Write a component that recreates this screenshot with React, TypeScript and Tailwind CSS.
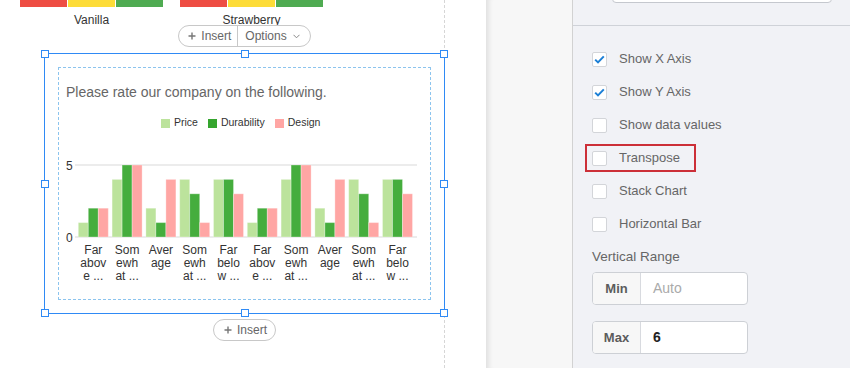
import React from 'react';

const bars = [
  [1, 2, 2],
  [4, 5, 5],
  [2, 1, 4],
  [4, 3, 1],
  [4, 4, 3],
  [1, 2, 2],
  [4, 5, 5],
  [2, 1, 4],
  [4, 3, 1],
  [4, 4, 3],
];

const labels = [
  ['Far', 'abov', 'e ...'],
  ['Som', 'ewh', 'at ...'],
  ['Aver', 'age'],
  ['Som', 'ewh', 'at ...'],
  ['Far', 'belo', 'w ...'],
  ['Far', 'abov', 'e ...'],
  ['Som', 'ewh', 'at ...'],
  ['Aver', 'age'],
  ['Som', 'ewh', 'at ...'],
  ['Far', 'belo', 'w ...'],
];

const barColors = ['#bce39c', '#45ad3d', '#ffa6a4'];

const options = [
  { label: 'Show X Axis', checked: true },
  { label: 'Show Y Axis', checked: true },
  { label: 'Show data values', checked: false },
  { label: 'Transpose', checked: false, highlight: true },
  { label: 'Stack Chart', checked: false },
  { label: 'Horizontal Bar', checked: false },
];

const Plus = () => (
  <svg width="8" height="8" viewBox="0 0 8 8">
    <path d="M4 0.5v7M0.5 4h7" stroke="#777" strokeWidth="1.4" />
  </svg>
);

const Handle = ({ className }: { className: string }) => (
  <div className={`absolute w-[8px] h-[8px] bg-white border border-[#2f8af5] ${className}`} />
);

const Checkbox = ({ checked }: { checked: boolean }) => (
  <div className="w-[15px] h-[15px] bg-white border border-[#d3d5d9] rounded-[2px] flex items-center justify-center">
    {checked && (
      <svg width="11" height="9" viewBox="0 0 11 9">
        <path d="M1.2 4.6l2.8 2.8L9.8 1.4" fill="none" stroke="#1b7fd6" strokeWidth="2" />
      </svg>
    )}
  </div>
);

const Chart = () => {
  const base = 87;
  const unit = 14.4;
  return (
    <svg width="372" height="140" viewBox="0 0 372 140" className="block">
      <line x1="16" y1="15" x2="358" y2="15" stroke="#e6e6e6" strokeWidth="1.5" />
      <line x1="16" y1={base} x2="358" y2={base} stroke="#e6e6e6" strokeWidth="1.5" />
      <text x="7" y="19.5" fontSize="12" fill="#333">5</text>
      <text x="7" y="91.5" fontSize="12" fill="#333">0</text>
      {bars.map((group, i) => {
        const x0 = 19.3 + i * 33.8;
        return (
          <g key={i}>
            {group.map((v, j) => (
              <rect
                key={j}
                x={x0 + j * 10}
                y={base - v * unit}
                width="10"
                height={v * unit}
                fill={barColors[j]}
                stroke="#ffffff"
                strokeOpacity="0.3"
                strokeWidth="1"
              />
            ))}
            {labels[i].map((line, k) => (
              <text key={k} x={x0 + 15} y={104 + k * 13} fontSize="12" fill="#333" textAnchor="middle">
                {line}
              </text>
            ))}
          </g>
        );
      })}
    </svg>
  );
};

const App = () => {
  return (
    <div className="w-[850px] h-[368px] overflow-hidden flex font-['Liberation_Sans',Arial,sans-serif]">
      {/* canvas */}
      <div className="w-[486px] h-full bg-white">
        <div className="w-[445px] h-full border-r border-dashed border-[#d6d6d6]">
          <div className="flex pl-[20px] gap-[17px]">
            {['Vanilla', 'Strawberry'].map(name => (
              <div key={name} className="w-[143px] flex flex-col">
                <div className="flex gap-px h-[7px]">
                  <div className="flex-1 bg-[#ee4d43]" />
                  <div className="flex-1 bg-[#fddc38]" />
                  <div className="flex-1 bg-[#4fab52]" />
                </div>
                <div className="mt-[6px] text-center text-[12px] leading-[14px] text-[#333]">{name}</div>
              </div>
            ))}
          </div>

          <div className="ml-[44px] w-[401px] flex justify-center -mt-[2px]">
            <div className="h-[22px] flex items-center border border-[#c8c8c8] rounded-full bg-white text-[12px] text-[#666]">
              <div className="flex items-center gap-[5px] pl-[9px] pr-[6px] h-full border-r border-[#c8c8c8]">
                <Plus />
                <span>Insert</span>
              </div>
              <div className="flex items-center gap-[6px] pl-[7px] pr-[10px]">
                <span>Options</span>
                <svg width="7" height="5" viewBox="0 0 7 5">
                  <path d="M0.5 0.8l3 3 3-3" fill="none" stroke="#888" strokeWidth="1" />
                </svg>
              </div>
            </div>
          </div>

          <div className="relative mt-[6px] ml-[44px] w-[401px] h-[261px] border border-[#2f8af5] p-[13px]">
            <Handle className="-left-[4px] -top-[4px]" />
            <Handle className="left-[196px] -top-[4px]" />
            <Handle className="-right-[4px] -top-[4px]" />
            <Handle className="-left-[4px] top-[126px]" />
            <Handle className="-right-[4px] top-[126px]" />
            <Handle className="-left-[4px] -bottom-[4px]" />
            <Handle className="left-[196px] -bottom-[4px]" />
            <Handle className="-right-[4px] -bottom-[4px]" />

            <div className="h-full border border-dashed border-[#8cc4ee] flex flex-col">
              <div className="pl-[7px] pt-[15px] text-[14px] leading-[18px] text-[#666]">
                Please rate our company on the following.
              </div>
              <div className="mt-[15px] pl-[102px] flex items-center h-[14px] text-[10.5px] text-[#333]">
                <div className="w-[9px] h-[9px] bg-[#bce39c]" />
                <span className="ml-[4px]">Price</span>
                <div className="ml-[10px] w-[9px] h-[9px] bg-[#35a52e]" />
                <span className="ml-[4px]">Durability</span>
                <div className="ml-[10px] w-[9px] h-[9px] bg-[#ffa6a4]" />
                <span className="ml-[4px]">Design</span>
              </div>
              <div className="mt-[20px]">
                <Chart />
              </div>
            </div>
          </div>

          <div className="ml-[44px] w-[401px] flex justify-center mt-[5px]">
            <div className="h-[22px] flex items-center gap-[5px] pl-[10px] pr-[8px] border border-[#c8c8c8] rounded-full bg-white text-[12px] text-[#666]">
              <Plus />
              <span>Insert</span>
            </div>
          </div>
        </div>
      </div>

      {/* gutter */}
      <div className="w-[87px] h-full bg-[#f7f7f7] border-r border-[#d2d2d2] shadow-[inset_7px_0_5px_-4px_rgba(0,0,0,0.09)]" />

      {/* options panel */}
      <div className="flex-1 h-full bg-[#f1f2f6] flex flex-col">
        <div className="h-[26px] border-b border-[#cfd2d8] overflow-hidden">
          <div className="ml-[39px] w-[220px] h-[21px] -mt-[18px] bg-white border border-[#c5c8ce] rounded-[4px]" />
        </div>

        <div className="pt-[19px] pl-[12px] flex flex-col gap-[5px] items-start">
          {options.map(o => (
            <div
              key={o.label}
              className={`h-[28px] flex items-center pl-[5px] pr-[14px] border-2 ${o.highlight ? 'border-[#cc2f38]' : 'border-transparent'}`}
            >
              <Checkbox checked={o.checked} />
              <span className="ml-[12px] text-[13px] text-[#666]">{o.label}</span>
            </div>
          ))}
        </div>

        <div className="pl-[19px]">
          <div className="mt-[10px] text-[13.5px] leading-[18px] text-[#666]">Vertical Range</div>
          <div className="mt-[6px] w-[156px] h-[33px] flex border border-[#cdd0d5] rounded-[4px] bg-white overflow-hidden">
            <div className="w-[48px] flex items-center justify-center bg-[#f7f7f7] border-r border-[#d8dadf] text-[13px] font-bold text-[#5c5c5c]">
              Min
            </div>
            <div className="flex items-center pl-[12px] text-[14px] text-[#aaa]">Auto</div>
          </div>
          <div className="mt-[16px] w-[156px] h-[33px] flex border border-[#cdd0d5] rounded-[4px] bg-white overflow-hidden">
            <div className="w-[48px] flex items-center justify-center bg-[#f7f7f7] border-r border-[#d8dadf] text-[13px] font-bold text-[#5c5c5c]">
              Max
            </div>
            <div className="flex items-center pl-[12px] text-[14px] font-bold text-[#222]">6</div>
          </div>
        </div>
      </div>
    </div>
  );
};

export default App;
